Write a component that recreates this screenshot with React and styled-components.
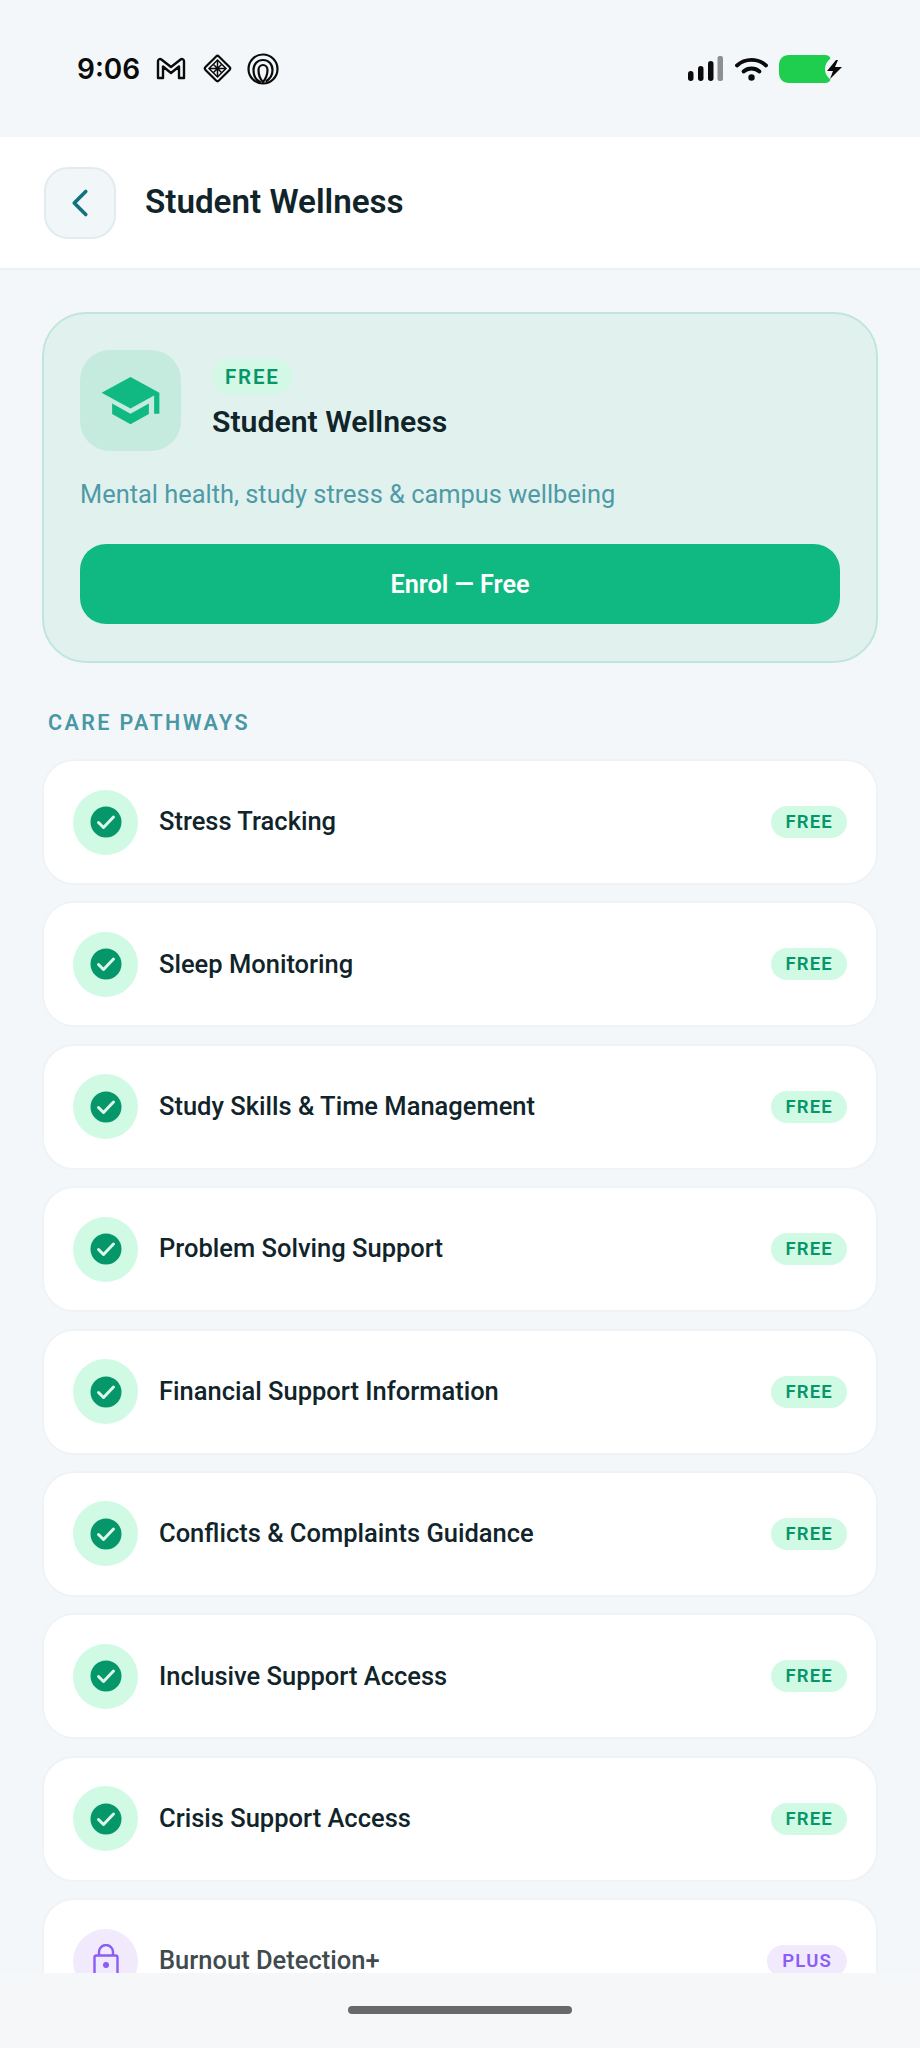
import React from "react";
import styled, { createGlobalStyle } from "styled-components";
import { ChevronLeft } from "lucide-react";

const GlobalStyle = createGlobalStyle`
  html, body {
    margin: 0;
    padding: 0;
    background: #f4f7f9;
  }
  * {
    box-sizing: border-box;
  }
`;

const Page = styled.div`
  width: 920px;
  height: 2048px;
  display: flex;
  flex-direction: column;
  overflow: hidden;
  background: #f4f7f9;
  font-family: Roboto, "Liberation Sans", sans-serif;
  color: #10242a;
`;

const StatusBar = styled.div`
  flex: none;
  height: 137px;
  padding: 0 77px;
  display: flex;
  align-items: center;
  justify-content: space-between;
`;

const StatusGroup = styled.div`
  display: flex;
  align-items: center;
`;

const Clock = styled.span`
  font-family: Inter, sans-serif;
  font-size: 28px;
  font-weight: 600;
  color: #0b0b0b;
  margin-right: 16px;
`;

const StatusIcon = styled.svg`
  display: block;
  margin-right: ${(p) => p.$gap || 0}px;
`;

const Header = styled.header`
  flex: none;
  height: 133px;
  padding: 0 44px;
  display: flex;
  align-items: center;
  gap: 29px;
  background: #fff;
  border-bottom: 2px solid #edf1f3;
`;

const BackButton = styled.button`
  width: 72px;
  height: 72px;
  padding: 0;
  display: flex;
  align-items: center;
  justify-content: center;
  background: #f1f7f8;
  border: 2px solid #e2ecee;
  border-radius: 24px;
  color: #0f7380;
`;

const HeaderTitle = styled.h1`
  margin: 0 0 2px;
  font-size: 33.2px;
  font-weight: 600;
  color: #10242a;
`;

const Content = styled.main`
  flex: 1;
  min-height: 0;
  overflow: hidden;
  padding: 42px 42px 0 42px;
`;

const Hero = styled.section`
  height: 351px;
  padding: 36px 36px 0;
  background: #e1f2ee;
  border: 2px solid #bfe6da;
  border-radius: 44px;
`;

const HeroTop = styled.div`
  display: flex;
  align-items: center;
  gap: 31px;
`;

const HeroTile = styled.div`
  width: 101px;
  height: 101px;
  display: flex;
  align-items: center;
  justify-content: center;
  background: #c5ebdf;
  border-radius: 30px;
  color: #10b981;
`;

const HeroText = styled.div`
  display: flex;
  flex-direction: column;
  align-items: flex-start;
  gap: 10px;
  padding-bottom: 3px;
`;

const HeroPill = styled.span`
  height: 35px;
  padding: 0 13px;
  display: flex;
  align-items: center;
  background: #d3f8e5;
  border-radius: 17px;
  font-size: 20.5px;
  font-weight: 600;
  letter-spacing: 1.8px;
  color: #059669;
`;

const HeroTitle = styled.h2`
  margin: 0;
  font-size: 30.2px;
  font-weight: 600;
  color: #10242a;
`;

const HeroDesc = styled.p`
  margin: 26px 0 0;
  font-size: 25.4px;
  line-height: 34px;
  color: #4f9aa6;
`;

const EnrolButton = styled.button`
  width: 760px;
  height: 80px;
  margin-top: 33px;
  background: #10b981;
  border: 0;
  border-radius: 26px;
  font-family: inherit;
  font-size: 25.2px;
  font-weight: 600;
  color: #fff;
`;

const SectionLabel = styled.h3`
  margin: 47px 0 0 6px;
  font-size: 21.5px;
  line-height: 26px;
  font-weight: 600;
  letter-spacing: 2.4px;
  color: #4a98a5;
`;

const RowList = styled.div`
  margin-top: 23px;
  display: flex;
  flex-direction: column;
  gap: 16.4px;
`;

const Row = styled.div`
  flex: none;
  height: 126px;
  padding: 0 29px;
  display: flex;
  align-items: center;
  background: #fff;
  border: 2px solid #f0f3f6;
  border-radius: 32px;
`;

const RowIcon = styled.div`
  flex: none;
  width: 65px;
  height: 65px;
  display: flex;
  align-items: center;
  justify-content: center;
  border-radius: 50%;
  background: ${(p) => (p.$locked ? "#f1eafd" : "#d1fae5")};
  color: ${(p) => (p.$locked ? "#8b5cf6" : "#059669")};
`;

const RowLabel = styled.span`
  flex: 1;
  margin-left: 21px;
  font-size: 25.5px;
  line-height: 1;
  font-weight: 500;
  color: ${(p) => (p.$locked ? "#3f4b4e" : "#10242a")};
`;

const RowPill = styled.span`
  height: 32px;
  padding: 0 ${(p) => (p.$locked ? 15 : 14)}px;
  display: flex;
  align-items: center;
  border-radius: 16px;
  font-size: 18.5px;
  font-weight: 600;
  letter-spacing: 1.2px;
  background: ${(p) => (p.$locked ? "#f1eafd" : "#d1fae5")};
  color: ${(p) => (p.$locked ? "#8b5cf6" : "#059669")};
`;

const BottomBar = styled.div`
  flex: none;
  height: 75px;
  padding-top: 33px;
  display: flex;
  justify-content: center;
  background: #f5f7f9;
`;

const HomeIndicator = styled.div`
  width: 224px;
  height: 8px;
  border-radius: 4px;
  background: #68696b;
`;

const pathways = [
  { label: "Stress Tracking" },
  { label: "Sleep Monitoring" },
  { label: "Study Skills & Time Management" },
  { label: "Problem Solving Support" },
  { label: "Financial Support Information" },
  { label: "Conflicts & Complaints Guidance" },
  { label: "Inclusive Support Access" },
  { label: "Crisis Support Access" },
  { label: "Burnout Detection+", locked: true },
];

function CheckBadge() {
  return (
    <svg width="32" height="32" viewBox="0 0 32 32">
      <circle cx="16" cy="16" r="15.5" fill="currentColor" />
      <path d="M8.5 16.5l5 5L23.5 11" fill="none" stroke="#dcf8ea" strokeWidth="3" strokeLinecap="round" strokeLinejoin="round" />
    </svg>
  );
}

function LockGlyph() {
  return (
    <svg width="28" height="34" viewBox="0 0 28 34" fill="none" stroke="currentColor" strokeWidth="2.4">
      <path d="M7 11V8a7 7 0 0 1 14 0v3" />
      <rect x="2.500" y="11.500" width="23" height="21" rx="2" />
      <circle cx="14" cy="21" r="3" fill="currentColor" stroke="none" />
    </svg>
  );
}

function GmailGlyph() {
  return (
    <StatusIcon $gap={16} width="30" height="23" viewBox="0 0 30 23">
      <path d="M2 21V4.2C2 2.4 4 1.4 5.4 2.5L15 10l9.6-7.5C26 1.4 28 2.4 28 4.2V21h-5V9.5L15 16 7 9.5V21z" fill="none" stroke="#0b0b0b" strokeWidth="2.4" strokeLinejoin="round" />
    </StatusIcon>
  );
}

function DiamondGlyph() {
  return (
    <StatusIcon $gap={14} width="31" height="31" viewBox="0 0 31 31">
      <rect x="6" y="6" width="19" height="19" rx="2" transform="rotate(45 15.5 15.5)" fill="none" stroke="#0b0b0b" strokeWidth="2.2" />
      <g fill="none" stroke="#0b0b0b" strokeWidth="1.500">
        <rect x="9.500" y="9.500" width="12" height="12" transform="rotate(45 15.5 15.5)" />
        <path d="M7.500 15.500h16M15.500 7.500v16M11.500 11.500l8 8M19.500 11.500l-8 8" />
      </g>
    </StatusIcon>
  );
}

function SpiralGlyph() {
  return (
    <StatusIcon width="32" height="32" viewBox="0 0 32 32">
      <g fill="none" stroke="#0b0b0b" strokeWidth="2.2" strokeLinecap="round">
        <circle cx="16" cy="16" r="14.5" />
        <path d="M13 29c-4-2-6.5-6-6.5-12C6.5 11 10.500 7 16 7s9.500 4 9.500 10c0 5-3 9-6 11" />
        <path d="M16 29c-3-3-4.500-7-4.500-12 0-3 2-5 4.500-5s4.500 2 4.500 5c0 5-2 9-4.500 12z" />
      </g>
    </StatusIcon>
  );
}

function SignalGlyph() {
  return (
    <StatusIcon $gap={12} width="35" height="25" viewBox="0 0 35 25">
      <rect x="0" y="15" width="5.500" height="10" rx="2.700" fill="#0b0b0b" />
      <rect x="10" y="10" width="5.500" height="15" rx="2.700" fill="#0b0b0b" />
      <rect x="20" y="5" width="5.500" height="20" rx="2.700" fill="#0b0b0b" />
      <rect x="29.500" y="0" width="5.500" height="25" rx="2" fill="#8f8f8f" />
    </StatusIcon>
  );
}

function WifiGlyph() {
  return (
    <StatusIcon $gap={11} width="33" height="24" viewBox="0 0 33 24">
      <g fill="none" stroke="#0b0b0b" strokeWidth="3.800" strokeLinecap="round">
        <path d="M2 8.500C10 1 23 1 31 8.500" />
        <path d="M8.500 14.500c4.500-4 11.500-4 16 0" />
      </g>
      <circle cx="16.500" cy="20.500" r="3.200" fill="#0b0b0b" />
    </StatusIcon>
  );
}

function BatteryGlyph() {
  return (
    <StatusIcon width="64" height="28" viewBox="0 0 64 28">
      <path d="M10 0h36c3 0 5 1.500 5.500 3.500C47.500 7 46 10 46 14c0 4 1.500 7 5.500 10.500C51 26.500 49 28 46 28H10C4 28 0 24 0 18V10C0 4 4 0 10 0z" fill="#1fce4f" />
      <path d="M57 5L48 16h6l-3 8 12-12h-7l3-7z" fill="#0b0b0b" />
    </StatusIcon>
  );
}

export default function App() {
  return (
    <Page>
      <GlobalStyle />
      <StatusBar>
        <StatusGroup>
          <Clock>9:06</Clock>
          <GmailGlyph />
          <DiamondGlyph />
          <SpiralGlyph />
        </StatusGroup>
        <StatusGroup>
          <SignalGlyph />
          <WifiGlyph />
          <BatteryGlyph />
        </StatusGroup>
      </StatusBar>
      <Header>
        <BackButton aria-label="Back">
          <ChevronLeft size={46} strokeWidth={1.9} />
        </BackButton>
        <HeaderTitle>Student Wellness</HeaderTitle>
      </Header>
      <Content>
        <Hero>
          <HeroTop>
            <HeroTile>
              <svg width="63" height="63" viewBox="0 0 24 24" fill="currentColor">
                <path d="M5 13.180v4L12 21l7-3.820v-4L12 17l-7-3.820zM12 3L1 9l11 6 9-4.910V17h2V9L12 3z" />
              </svg>
            </HeroTile>
            <HeroText>
              <HeroPill>FREE</HeroPill>
              <HeroTitle>Student Wellness</HeroTitle>
            </HeroText>
          </HeroTop>
          <HeroDesc>Mental health, study stress &amp; campus wellbeing</HeroDesc>
          <EnrolButton>Enrol — Free</EnrolButton>
        </Hero>
        <SectionLabel>CARE PATHWAYS</SectionLabel>
        <RowList>
          {pathways.map((item) => (
            <Row key={item.label}>
              <RowIcon $locked={item.locked}>
                {item.locked ? <LockGlyph /> : <CheckBadge />}
              </RowIcon>
              <RowLabel $locked={item.locked}>{item.label}</RowLabel>
              <RowPill $locked={item.locked}>{item.locked ? "PLUS" : "FREE"}</RowPill>
            </Row>
          ))}
        </RowList>
      </Content>
      <BottomBar>
        <HomeIndicator />
      </BottomBar>
    </Page>
  );
}
